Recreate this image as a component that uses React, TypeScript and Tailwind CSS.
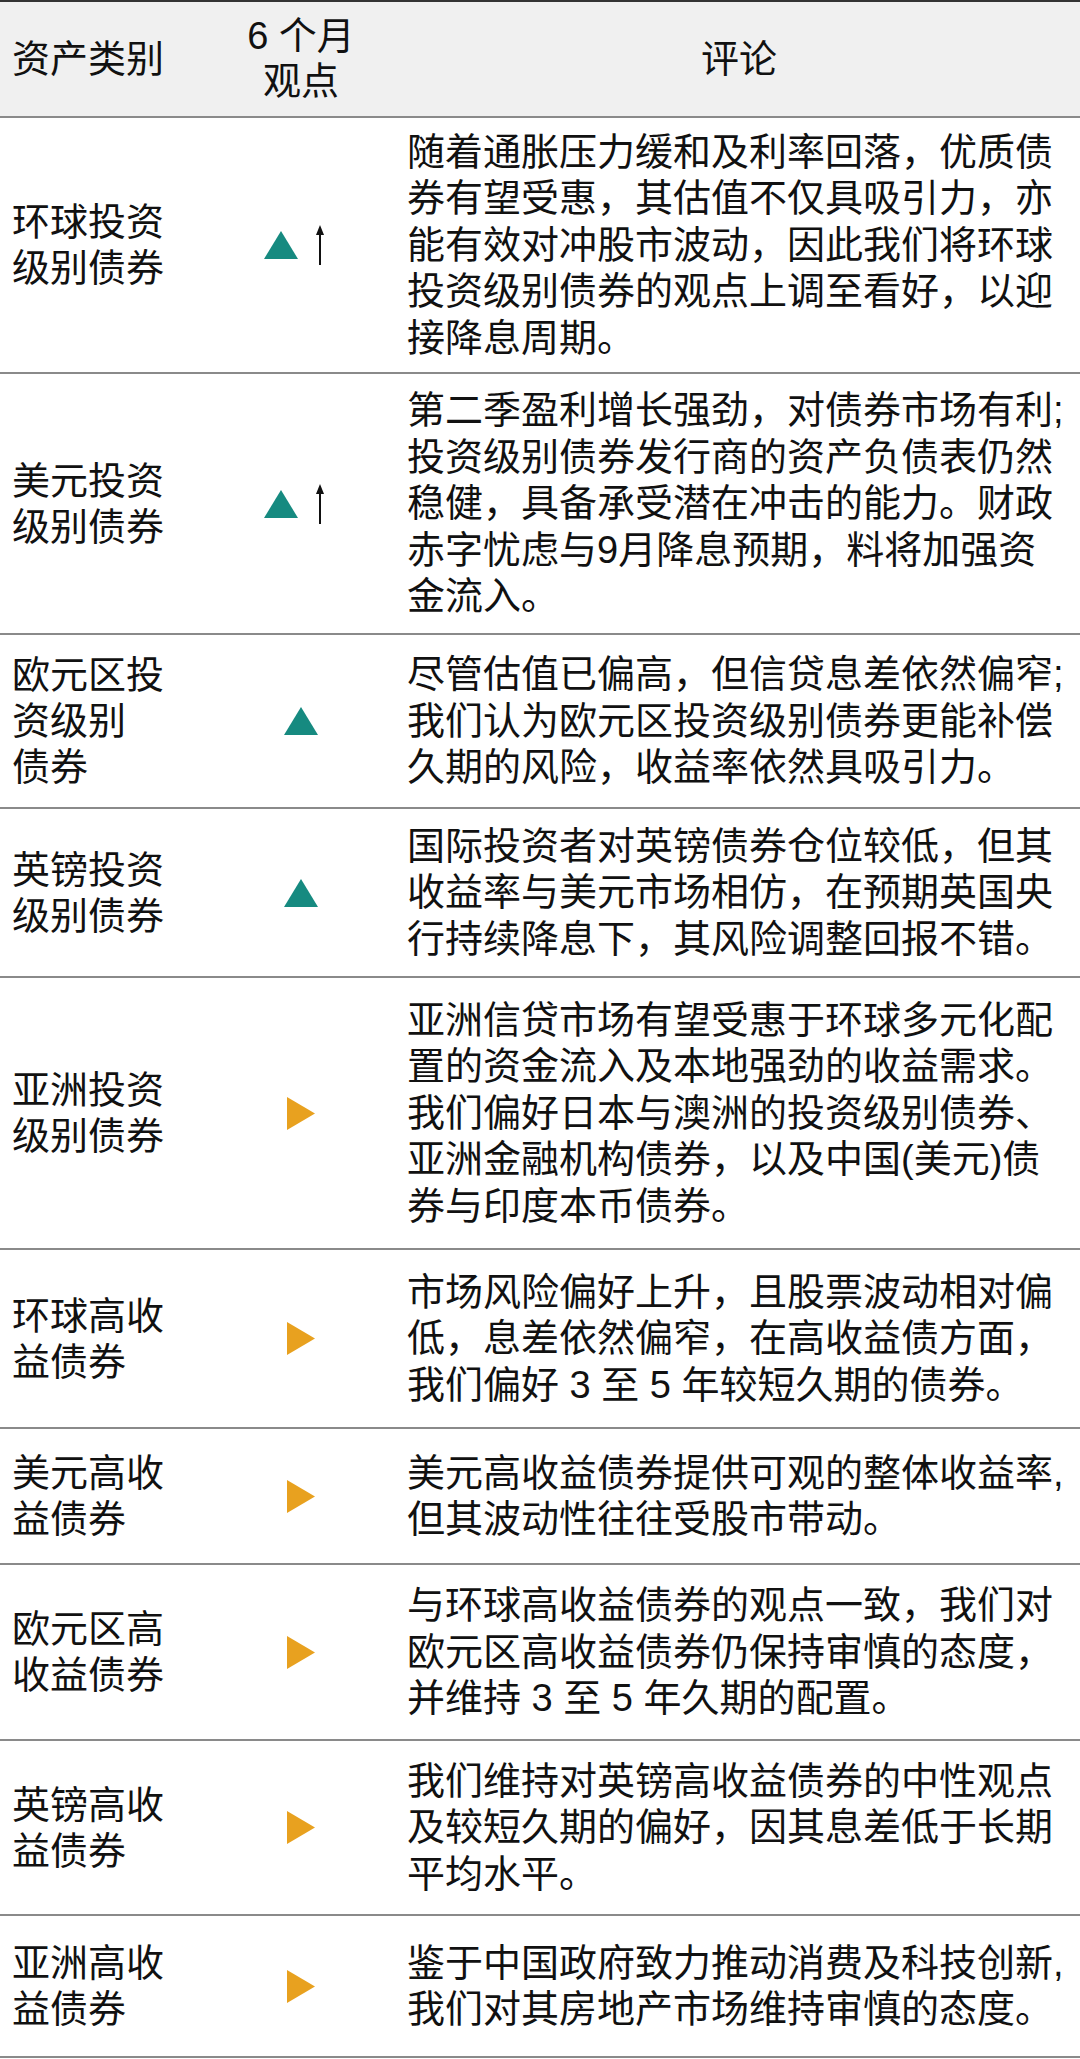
import React from 'react';

type View = 'up-arrow' | 'up' | 'neutral';

type Row = {
  asset: string[];
  view: View;
  comment: string[];
  height: string;
};

const rows: Row[] = [
  {
    asset: ['环球投资', '级别债券'],
    view: 'up-arrow',
    height: 'h-[256px]',
    comment: [
      '随着通胀压力缓和及利率回落，优质债',
      '券有望受惠，其估值不仅具吸引力，亦',
      '能有效对冲股市波动，因此我们将环球',
      '投资级别债券的观点上调至看好，以迎',
      '接降息周期。',
    ],
  },
  {
    asset: ['美元投资', '级别债券'],
    view: 'up-arrow',
    height: 'h-[261px]',
    comment: [
      '第二季盈利增长强劲，对债券市场有利;',
      '投资级别债券发行商的资产负债表仍然',
      '稳健，具备承受潜在冲击的能力。财政',
      '赤字忧虑与9月降息预期，料将加强资',
      '金流入。',
    ],
  },
  {
    asset: ['欧元区投', '资级别', '债券'],
    view: 'up',
    height: 'h-[174px]',
    comment: [
      '尽管估值已偏高，但信贷息差依然偏窄;',
      '我们认为欧元区投资级别债券更能补偿',
      '久期的风险，收益率依然具吸引力。',
    ],
  },
  {
    asset: ['英镑投资', '级别债券'],
    view: 'up',
    height: 'h-[169px]',
    comment: [
      '国际投资者对英镑债券仓位较低，但其',
      '收益率与美元市场相仿，在预期英国央',
      '行持续降息下，其风险调整回报不错。',
    ],
  },
  {
    asset: ['亚洲投资', '级别债券'],
    view: 'neutral',
    height: 'h-[272px]',
    comment: [
      '亚洲信贷市场有望受惠于环球多元化配',
      '置的资金流入及本地强劲的收益需求。',
      '我们偏好日本与澳洲的投资级别债券、',
      '亚洲金融机构债券，以及中国(美元)债',
      '券与印度本币债券。',
    ],
  },
  {
    asset: ['环球高收', '益债券'],
    view: 'neutral',
    height: 'h-[179px]',
    comment: [
      '市场风险偏好上升，且股票波动相对偏',
      '低，息差依然偏窄，在高收益债方面，',
      '我们偏好 3 至 5 年较短久期的债券。',
    ],
  },
  {
    asset: ['美元高收', '益债券'],
    view: 'neutral',
    height: 'h-[136px]',
    comment: ['美元高收益债券提供可观的整体收益率,', '但其波动性往往受股市带动。'],
  },
  {
    asset: ['欧元区高', '收益债券'],
    view: 'neutral',
    height: 'h-[176px]',
    comment: [
      '与环球高收益债券的观点一致，我们对',
      '欧元区高收益债券仍保持审慎的态度，',
      '并维持 3 至 5 年久期的配置。',
    ],
  },
  {
    asset: ['英镑高收', '益债券'],
    view: 'neutral',
    height: 'h-[175px]',
    comment: [
      '我们维持对英镑高收益债券的中性观点',
      '及较短久期的偏好，因其息差低于长期',
      '平均水平。',
    ],
  },
  {
    asset: ['亚洲高收', '益债券'],
    view: 'neutral',
    height: 'h-[142px]',
    comment: ['鉴于中国政府致力推动消费及科技创新,', '我们对其房地产市场维持审慎的态度。'],
  },
];

const TealUp = () => (
  <svg width="34" height="28" viewBox="0 0 34 28">
    <polygon points="17,0 34,28 0,28" fill="#168a80" />
  </svg>
);

const Arrow = () => (
  <svg width="10" height="40" viewBox="0 0 10 40">
    <line x1="5" y1="40" x2="5" y2="7" stroke="#111" strokeWidth="2" />
    <polygon points="5,0 1,10 9,10" fill="#111" />
  </svg>
);

const OrangeRight = () => (
  <svg width="28" height="33" viewBox="0 0 28 33">
    <polygon points="0,0 28,16.5 0,33" fill="#e8a11f" />
  </svg>
);

const ViewMark = ({ view }: { view: View }) => {
  if (view === 'up-arrow') {
    return (
      <div className="flex items-center gap-[17px] -translate-x-[7px]">
        <TealUp />
        <Arrow />
      </div>
    );
  }
  if (view === 'up') return <TealUp />;
  return <OrangeRight />;
};

const App: React.FC = () => {
  return (
    <div className="w-[1080px] bg-white text-[#111] text-[38px] leading-[46.5px] font-['Liberation_Sans','Noto_Sans_CJK_SC',sans-serif] overflow-hidden">
      {/* Header */}
      <div className="grid grid-cols-[200px_202px_1fr] h-[118px] bg-[#f0f0f0] border-t-2 border-b-2 border-t-[#333] border-b-[#8a8a8a]">
        <div className="flex items-center pl-3">资产类别</div>
        <div className="flex flex-col items-center justify-center leading-[45px]">
          <span className="whitespace-nowrap">6 个月</span>
          <span>观点</span>
        </div>
        <div className="flex items-center justify-center pr-[4px]">评论</div>
      </div>

      {/* Rows */}
      {rows.map((row, i) => (
        <div
          key={i}
          className={`grid grid-cols-[200px_202px_1fr] border-b-2 border-[#8a8a8a] ${row.height}`}
        >
          <div className="flex flex-col justify-center pl-3 leading-[46px]">
            {row.asset.map((line, j) => (
              <span key={j} className="whitespace-nowrap">
                {line}
              </span>
            ))}
          </div>
          <div className="flex items-center justify-center">
            <ViewMark view={row.view} />
          </div>
          <div className="flex flex-col justify-center pl-[5px]">
            {row.comment.map((line, j) => (
              <span key={j} className="whitespace-nowrap">
                {line}
              </span>
            ))}
          </div>
        </div>
      ))}
    </div>
  );
};

export default App;
